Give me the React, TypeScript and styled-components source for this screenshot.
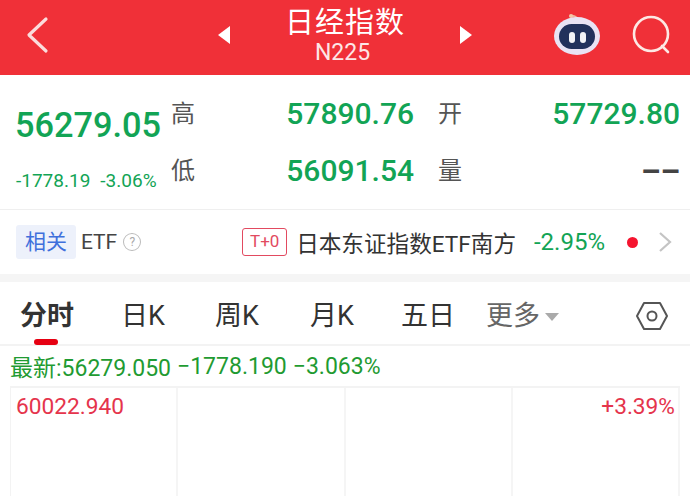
import React from 'react';
import styled, { createGlobalStyle } from 'styled-components';

const GlobalStyle = createGlobalStyle`
    html, body {
        margin: 0;
        padding: 0;
        background: #fff;
        overflow: hidden;
    }
    body {
        font-family: "Roboto", "Noto Sans CJK SC", sans-serif;
    }
`;

const Page = styled.div`
    width: 690px;
    height: 496px;
    overflow: hidden;
    display: flex;
    flex-direction: column;
    background: #fff;
`;

const Header = styled.header`
    height: 75px;
    flex: none;
    background: #f03038;
    color: #fff;
    display: grid;
    grid-template-columns: 218px 254px 1fr 72px;
    box-sizing: border-box;
    padding: 0 18px 6px 0;
    align-items: center;
`;

const BackSlot = styled.div`
    padding-left: 26px;
    display: flex;
`;

const TitleGroup = styled.div`
    display: flex;
    align-items: center;
    justify-content: space-between;
`;

const Title = styled.div`
    text-align: center;
    margin-top: 2px;
`;

const TitleMain = styled.div`
    font-size: 29px;
    line-height: 34px;
    letter-spacing: 1px;
`;

const TitleSub = styled.div`
    font-size: 23px;
    line-height: 26px;
    margin-right: 5px;
    color: #fde6e6;
`;

const IconSlot = styled.div`
    display: flex;
    justify-content: flex-end;
`;

const Quote = styled.section`
    height: 135px;
    flex: none;
    box-sizing: border-box;
    padding: 20px 10px 0 16px;
    display: grid;
    grid-template-columns: 155px 243px 1fr;
    grid-template-rows: 57px 57px;
    border-bottom: 1px solid #efefef;
`;

const MainPrice = styled.div`
    display: flex;
    flex-direction: column;
    grid-row: 1 / span 2;
`;

const BigNumber = styled.div`
    font-size: 34.3px;
    line-height: 42px;
    margin: 9px 0 0 -1px;
    color: #12a455;
    font-weight: 500;
`;

const ChangeRow = styled.div`
    display: flex;
    gap: 10px;
    margin-top: 24px;
    font-size: 19px;
    line-height: 22px;
    color: #12a455;
    white-space: nowrap;
`;

const Cell = styled.div<{ $second?: boolean }>`
    display: flex;
    justify-content: space-between;
    height: 38px;
    align-items: center;
    margin-left: ${(p) => (p.$second ? 24 : 0)}px;
`;

const QuoteLabel = styled.span`
    font-size: 24px;
    margin-top: -6px;
    color: #555;
`;

const QuoteValue = styled.span`
    font-size: 30px;
    margin-top: -1px;
    color: #12a455;
    font-weight: 500;
`;

const Dashes = styled.span`
    font-size: 31px;
    font-weight: 700;
    color: #444;
`;

const EtfRow = styled.section`
    height: 64px;
    flex: none;
    box-sizing: border-box;
    padding: 0 18px 0 16px;
    display: flex;
    align-items: center;
    color: #333;
`;

const Tag = styled.span`
    background: #edf1fb;
    color: #3f70dc;
    font-size: 21px;
    line-height: 34px;
    width: 60px;
    text-align: center;
    border-radius: 3px;
`;

const EtfLabel = styled.span`
    font-size: 21px;
    margin-left: 5px;
    color: #444;
`;

const HelpMark = styled.span`
    width: 16px;
    height: 16px;
    margin-left: 6px;
    border: 1.5px solid #bbb;
    border-radius: 50%;
    color: #aaa;
    font-size: 12px;
    line-height: 16px;
    text-align: center;
`;

const TplusTag = styled.span`
    margin-left: 101px;
    width: 45px;
    height: 28px;
    box-sizing: border-box;
    border: 1.5px solid #e24a60;
    border-radius: 3px;
    color: #e24a60;
    font-size: 17px;
    line-height: 25px;
    text-align: center;
`;

const FundName = styled.span`
    margin-left: 9px;
    font-size: 22.6px;
    color: #333;
    white-space: nowrap;
`;

const FundChange = styled.span`
    margin-left: 18px;
    font-size: 24px;
    color: #12a455;
`;

const RedDot = styled.span`
    width: 11px;
    height: 11px;
    margin-left: 22px;
    background: #f5142f;
    border-radius: 50%;
`;

const ChevronSlot = styled.span`
    margin-left: 20px;
    display: flex;
`;

const Spacer = styled.div`
    height: 8px;
    flex: none;
    background: #f5f5f5;
`;

const Tabs = styled.nav`
    height: 64px;
    flex: none;
    box-sizing: border-box;
    display: flex;
    align-items: center;
    padding: 5px 20px 0 20px;
    border-bottom: 2px solid #f3f3f3;
`;

const Tab = styled.div<{ $active?: boolean; $width: number }>`
    width: ${(p) => p.$width}px;
    flex: none;
    position: relative;
    font-size: 27px;
    line-height: 36px;
    white-space: nowrap;
    color: #333;
    font-weight: ${(p) => (p.$active ? 700 : 400)};
`;

const ActiveBar = styled.span`
    position: absolute;
    left: 14px;
    top: 41px;
    width: 24px;
    height: 6px;
    border-radius: 3px;
    background: #e60012;
`;

const MoreTab = styled.div`
    display: flex;
    align-items: center;
    gap: 5px;
    font-size: 27px;
    line-height: 36px;
    color: #666;
    width: 149px;
    flex: none;
`;

const Caret = styled.span`
    width: 0;
    height: 0;
    margin-top: 3px;
    border-left: 7px solid transparent;
    border-right: 7px solid transparent;
    border-top: 8px solid #aaa;
`;

const LatestRow = styled.div`
    height: 40px;
    flex: none;
    box-sizing: border-box;
    padding: 0 0 0 10px;
    display: flex;
    align-items: center;
    gap: 6px;
    font-size: 23px;
    color: #1f9b32;
`;

const Chart = styled.section`
    flex: 1;
    margin: 0 10px;
    position: relative;
    display: grid;
    grid-template-columns: repeat(4, 1fr);
    border-top: 2px solid #f3f3f3;
    border-left: 1px solid #f3f3f3;
`;

const ChartColumn = styled.div`
    border-right: 2px solid #f5f5f5;
`;

const AxisLabel = styled.span<{ $side: 'left' | 'right' }>`
    position: absolute;
    top: 5px;
    ${(p) => p.$side}: 5px;
    font-size: 22.7px;
    line-height: 28px;
    color: #e5344c;
`;

const BackIcon = () => (
    <svg width="24" height="38" viewBox="0 0 24 38" fill="none">
        <path d="M20 3 L3 19 L20 35" stroke="#fbdcdc" strokeWidth="3.2" strokeLinecap="round" strokeLinejoin="round" />
    </svg>
);

const Triangle = ({ dir }: { dir: 'left' | 'right' }) => (
    <svg width="12" height="18" viewBox="0 0 12 18">
        <path d={dir === 'left' ? 'M12 0 V18 L0 9 Z' : 'M0 0 V18 L12 9 Z'} fill="#fff" />
    </svg>
);

const RobotIcon = () => (
    <svg width="46" height="41" viewBox="0 0 46 41">
        <path d="M23 4 Q20 1 17 2" stroke="#f0b8a0" strokeWidth="2" fill="none" />
        <circle cx="17" cy="2" r="2" fill="#f5c9a8" />
        <ellipse cx="23" cy="22" rx="23" ry="19" fill="#e9e3f4" />
        <rect x="5" y="10" width="36" height="25" rx="12.5" fill="#22315c" />
        <rect x="15" y="18" width="6" height="11" rx="3" fill="#f2f2f6" />
        <rect x="26" y="18" width="6" height="11" rx="3" fill="#f2f2f6" />
    </svg>
);

const SearchIcon = () => (
    <svg width="40" height="40" viewBox="0 0 40 40" fill="none" stroke="#fde8e4" strokeWidth="2.6" strokeLinecap="round">
        <circle cx="19" cy="19" r="17" />
        <path d="M30 31 L36 37" />
    </svg>
);

const ChevronIcon = () => (
    <svg width="14" height="22" viewBox="0 0 14 22" fill="none">
        <path d="M2 2 L12 11 L2 20" stroke="#c4c4c4" strokeWidth="2.2" />
    </svg>
);

const HexIcon = () => (
    <svg width="34" height="30" viewBox="0 0 34 30" fill="none" stroke="#555" strokeWidth="2">
        <path d="M9 2 H25 L32 15 L25 28 H9 L2 15 Z" strokeLinejoin="round" />
        <circle cx="17" cy="15" r="4.5" />
    </svg>
);

export default function App() {
    return (
        <Page>
            <GlobalStyle />
            <Header>
                <BackSlot><BackIcon /></BackSlot>
                <TitleGroup>
                    <Triangle dir="left" />
                    <Title>
                        <TitleMain>日经指数</TitleMain>
                        <TitleSub>N225</TitleSub>
                    </Title>
                    <Triangle dir="right" />
                </TitleGroup>
                <IconSlot><RobotIcon /></IconSlot>
                <IconSlot><SearchIcon /></IconSlot>
            </Header>
            <Quote>
                <MainPrice>
                    <BigNumber>56279.05</BigNumber>
                    <ChangeRow><span>-1778.19</span><span>-3.06%</span></ChangeRow>
                </MainPrice>
                <Cell><QuoteLabel>高</QuoteLabel><QuoteValue>57890.76</QuoteValue></Cell>
                <Cell $second><QuoteLabel>开</QuoteLabel><QuoteValue>57729.80</QuoteValue></Cell>
                <Cell><QuoteLabel>低</QuoteLabel><QuoteValue>56091.54</QuoteValue></Cell>
                <Cell $second><QuoteLabel>量</QuoteLabel><Dashes>––</Dashes></Cell>
            </Quote>
            <EtfRow>
                <Tag>相关</Tag>
                <EtfLabel>ETF</EtfLabel>
                <HelpMark>?</HelpMark>
                <TplusTag>T+0</TplusTag>
                <FundName>日本东证指数ETF南方</FundName>
                <FundChange>-2.95%</FundChange>
                <RedDot />
                <ChevronSlot><ChevronIcon /></ChevronSlot>
            </EtfRow>
            <Spacer />
            <Tabs>
                <Tab $active $width={101}>分时<ActiveBar /></Tab>
                <Tab $width={94}>日K</Tab>
                <Tab $width={95}>周K</Tab>
                <Tab $width={91}>月K</Tab>
                <Tab $width={85}>五日</Tab>
                <MoreTab>更多<Caret /></MoreTab>
                <HexIcon />
            </Tabs>
            <LatestRow>
                <span>最新:56279.050</span>
                <span>−1778.190</span>
                <span>−3.063%</span>
            </LatestRow>
            <Chart>
                <ChartColumn />
                <ChartColumn />
                <ChartColumn />
                <ChartColumn />
                <AxisLabel $side="left">60022.940</AxisLabel>
                <AxisLabel $side="right">+3.39%</AxisLabel>
            </Chart>
        </Page>
    );
}
